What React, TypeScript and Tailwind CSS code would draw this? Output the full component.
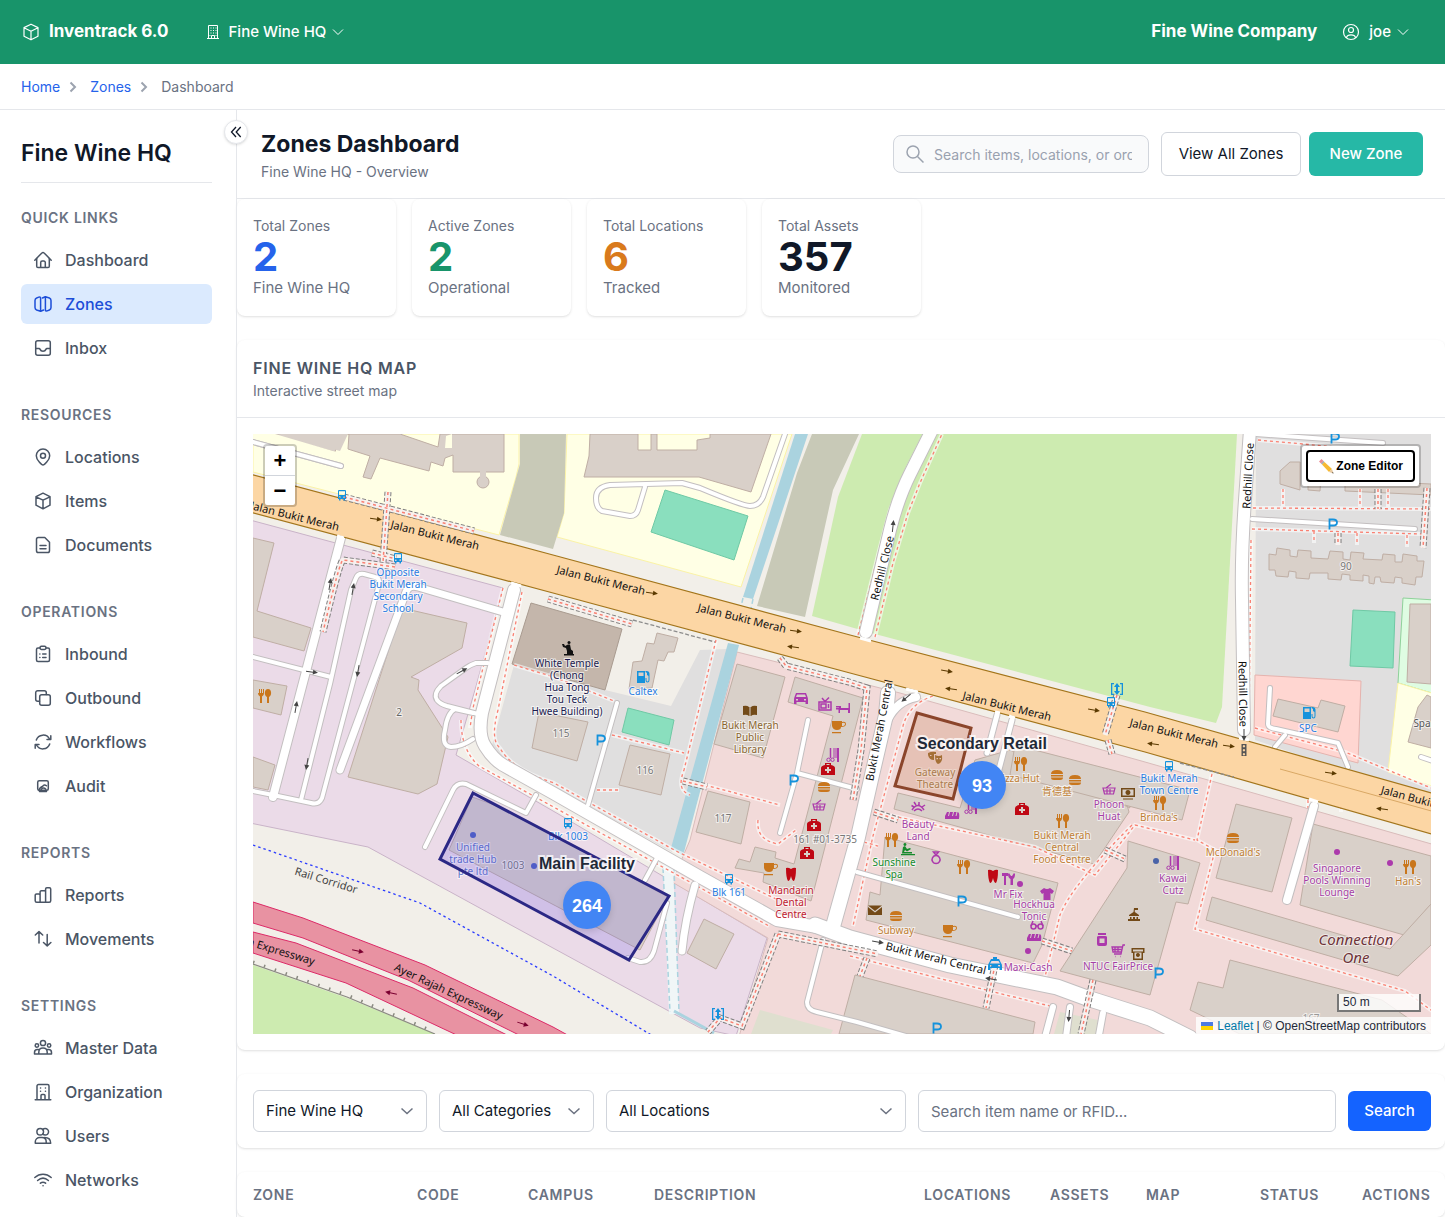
import type { ReactNode } from "react"

interface IconProps {
  className?: string
  children?: ReactNode
}

function Icon({ className = "w-5 h-5", children }: IconProps) {
  return (
    <svg className={className} viewBox="0 0 20 20" fill="none" stroke="currentColor" strokeWidth={1.5} strokeLinecap="round" strokeLinejoin="round" aria-hidden="true">
      {children}
    </svg>
  )
}

const cube = <path d="M10 2.2 17 5.6v8.6L10 17.8 3 14.2V5.6zM3 5.8l7 3.4 7-3.4M10 9.2v8.4" />

const navIcons: Record<string, ReactNode> = {
  Dashboard: (
    <>
      <path d="M1.8 10.2 8.9 2.9a1.5 1.5 0 0 1 2.2 0l7.1 7.3" />
      <path d="M3.7 8.6v7.6A1.3 1.3 0 0 0 5 17.5h10a1.3 1.3 0 0 0 1.3-1.3V8.6M7.7 17.5v-5a1.5 1.5 0 0 1 1.5-1.5h1.6a1.5 1.5 0 0 1 1.5 1.5v5" />
    </>
  ),
  Zones: (
    <>
      <path d="M7.6 17.2 3.6 16Q2 15.4 2 13.6V6.4q0-1.8 1.6-2.4l2.2-.9q1.8-.5 1.8 1z" />
      <path d="m12.4 2.8 4 1.2Q18 4.6 18 6.4v7.2q0 1.8-1.6 2.4l-2.2.9q-1.8.5-1.8-1z" />
      <path d="m7.6 17.2 3-1.2M12.4 2.8l-3 1.2" />
    </>
  ),
  Inbox: (
    <>
      <rect x="2.7" y="2.7" width="14.6" height="14.6" rx="2" />
      <path d="M3 10.5h3c.6 0 .9.4 1.1.9.4 1 1.5 1.8 2.9 1.8s2.5-.8 2.9-1.8c.2-.5.5-.9 1.1-.9h3" />
    </>
  ),
  Locations: (
    <>
      <path d="M10 18c-1 0-6.7-4.7-6.7-9.3a6.7 6.7 0 0 1 13.4 0C16.7 13.3 11 18 10 18z" />
      <circle cx="10" cy="8.7" r="2.5" />
    </>
  ),
  Items: cube,
  Documents: (
    <path d="M11.8 2.5H5.3a1.8 1.8 0 0 0-1.8 1.8v11.4a1.8 1.8 0 0 0 1.8 1.8h9.4a1.8 1.8 0 0 0 1.8-1.8V7.2zM7 10.5h6M7 13.7h6" />
  ),
  Inbound: (
    <>
      <path d="M7 4H5a1.5 1.5 0 0 0-1.5 1.5V16A1.5 1.5 0 0 0 5 17.5h10a1.5 1.5 0 0 0 1.5-1.5V5.5A1.5 1.5 0 0 0 15 4h-2" />
      <rect x="7" y="2.3" width="6" height="3.2" rx="1.4" />
      <path d="M6.8 10h.1M9.7 10H13M6.8 13.5h.1M9.7 13.5H13" />
    </>
  ),
  Outbound: (
    <>
      <rect x="6.7" y="6.7" width="10.6" height="10.6" rx="2" />
      <path d="M13.3 6.5V4.7a2 2 0 0 0-2-2H4.7a2 2 0 0 0-2 2v6.6a2 2 0 0 0 2 2h1.8" />
    </>
  ),
  Workflows: (
    <>
      <path d="M3.3 8A7.2 7.2 0 0 1 16.5 7M16.7 12A7.2 7.2 0 0 1 3.5 13" />
      <path d="M17.8 3.8v3.7H14M2.2 16.2v-3.7H6" />
    </>
  ),
  Audit: (
    <>
      <rect x="4.7" y="4.7" width="10.6" height="9.6" rx="1.5" />
      <path d="M6 14.5c.5-2.5 2-3.8 3.8-4.3.8-1.5 2.2-1.7 3.7-.4M8.3 13.3c.8-1.6 3.2-1.6 4.5 0M6.5 15.5h7" />
    </>
  ),
  Reports: (
    <path d="M2.2 10.2a1.3 1.3 0 0 1 1.3-1.3h2.3a1.3 1.3 0 0 1 1.3 1.3v7H3.7a1.5 1.5 0 0 1-1.5-1.5zM7.1 17.2V7a1.3 1.3 0 0 1 1.3-1.3h2.9A1.3 1.3 0 0 1 12.6 7M12.6 17.2V4a1.3 1.3 0 0 1 1.3-1.3h2.5A1.3 1.3 0 0 1 17.7 4v11.7a1.5 1.5 0 0 1-1.5 1.5H6.5" />
  ),
  Movements: <path d="M6 14V2.8M2.3 6 6 2.6 9.7 6M14.2 5.5v11.2M10.5 13.5l3.7 3.4 3.7-3.4" />,
  "Master Data": (
    <>
      <circle cx="10" cy="5" r="2.6" />
      <circle cx="3.9" cy="7.5" r="1.7" />
      <circle cx="16.1" cy="7.5" r="1.7" />
      <path d="M5.8 16v-1.8C5.8 11.8 7.5 10 10 10s4.2 1.8 4.2 4.2V16zM5.5 16h-4v-1.5c0-1.8.9-3 2.9-3h1M14.5 16h4v-1.5c0-1.8-.9-3-2.9-3h-1" />
    </>
  ),
  Organization: (
    <path d="M4 17.5V4a1.5 1.5 0 0 1 1.5-1.5h9A1.5 1.5 0 0 1 16 4v13.5M2.2 17.7h15.6M8 17.5v-4a1 1 0 0 1 1-1h2a1 1 0 0 1 1 1v4M7.5 6h.1M12.4 6h.1M7.5 9.2h.1M12.4 9.2h.1" />
  ),
  Users: (
    <>
      <circle cx="7.2" cy="5.8" r="3.3" />
      <path d="M9.8 3.6a3.3 3.3 0 1 1 0 4.4" />
      <path d="M2.3 17.2v-1.4c0-2.5 2-4.3 4.6-4.3h2c2.6 0 4.3 1.8 4.3 4.3v1.4zM11.5 11.5c3.9 0 6.2 1.6 6.2 5.7H13.5" />
    </>
  ),
  Networks: <path d="M1.8 7.5c4.9-4.4 11.5-4.4 16.4 0M4.6 10.5c3.3-2.9 7.5-2.9 10.8 0M7.4 13.2c1.7-1.3 3.5-1.3 5.2 0M10 15.8h.1" />,
}

const navSections = [
  { title: "Quick Links", items: ["Dashboard", "Zones", "Inbox"] },
  { title: "Resources", items: ["Locations", "Items", "Documents"] },
  { title: "Operations", items: ["Inbound", "Outbound", "Workflows", "Audit"] },
  { title: "Reports", items: ["Reports", "Movements"] },
  { title: "Settings", items: ["Master Data", "Organization", "Users", "Networks"] },
]

const stats = [
  { label: "Total Zones", value: "2", note: "Fine Wine HQ", color: "text-[#2563eb]" },
  { label: "Active Zones", value: "2", note: "Operational", color: "text-[#18946a]" },
  { label: "Total Locations", value: "6", note: "Tracked", color: "text-[#d97a1c]" },
  { label: "Total Assets", value: "357", note: "Monitored", color: "text-gray-900" },
]

const columns = [
  { name: "Zone", width: "w-[180px] pl-4" },
  { name: "Code", width: "w-[111px]" },
  { name: "Campus", width: "w-[126px]" },
  { name: "Description", width: "" },
  { name: "Locations", width: "w-[126px]" },
  { name: "Assets", width: "w-[96px]" },
  { name: "Map", width: "w-[114px]" },
  { name: "Status", width: "w-[102px]" },
  { name: "Actions", width: "w-[83px]" },
]

function TopBar() {
  return (
    <header className="flex items-center justify-between h-16 pl-[21px] pr-9 bg-[#18946a] text-white">
      <div className="flex items-center">
        <Icon className="w-5 h-5">
          <g strokeWidth={1.2}>{cube}</g>
        </Icon>
        <span className="ml-2 text-[17px] font-bold">Inventrack 6.0</span>
        <button className="flex items-center gap-1.5 ml-[34px]">
          <svg className="w-5 h-5" viewBox="0 0 20 20" fill="none" stroke="currentColor" strokeWidth={1} aria-hidden="true">
            <path d="M5.5 16.5V3.5h9v13M4 16.5h12M8.5 16.5v-3h3v3" />
            <path d="M7.5 6h1M10 6h1M12.5 6h1M7.5 8.5h1M10 8.5h1M12.5 8.5h1M7.5 11h1M10 11h1M12.5 11h1M6.5 13.5h1M12.5 13.5h1" />
          </svg>
          <span className="text-[15px] font-medium">Fine Wine HQ</span>
          <Chevron />
        </button>
      </div>
      <div className="flex items-center">
        <span className="text-[17px] font-bold">Fine Wine Company</span>
        <button className="flex items-center ml-6">
          <Icon className="w-5 h-5">
            <g strokeWidth={1.2}>
              <circle cx="10" cy="10" r="7.5" />
              <circle cx="10" cy="8" r="2.5" />
              <path d="M5.5 15.5c.5-2 2-2.7 4.5-2.7s4 .7 4.5 2.7" />
            </g>
          </Icon>
          <span className="ml-2 mr-1.5 text-[15px] font-medium">joe</span>
          <Chevron />
        </button>
      </div>
    </header>
  )
}

function Chevron() {
  return (
    <svg className="w-3 h-3" viewBox="0 0 12 12" fill="none" stroke="currentColor" aria-hidden="true">
      <path d="m1 3.5 5 5 5-5" />
    </svg>
  )
}

function Crumb() {
  return (
    <svg className="w-2.5 h-3" viewBox="0 0 10 12" fill="none" stroke="#9ca3af" strokeWidth={2} aria-hidden="true">
      <path d="m2.5 1.5 4.5 4.5-4.5 4.5" />
    </svg>
  )
}

function Breadcrumbs() {
  return (
    <nav aria-label="Breadcrumb" className="flex items-center gap-2 h-[46px] px-[21px] border-b border-gray-200 text-sm">
      <a href="#" className="text-[#2563eb]">Home</a>
      <Crumb />
      <a href="#" className="ml-1 text-[#2563eb]">Zones</a>
      <Crumb />
      <span className="ml-1 text-gray-500">Dashboard</span>
    </nav>
  )
}

function Sidebar() {
  return (
    <aside className="relative w-[237px] shrink-0 border-r border-gray-200 pl-[21px] pr-6 pt-[27px] pb-4">
      <button aria-label="Collapse sidebar" className="absolute top-2.5 -right-3 w-6 h-6 flex items-center justify-center rounded-full bg-white border border-gray-200 shadow-sm text-gray-900">
        <svg className="w-3 h-3" viewBox="0 0 12 12" fill="none" stroke="currentColor" strokeWidth={1.3} aria-hidden="true">
          <path d="M6 1 1.5 6 6 11M10.7 1 6.2 6l4.5 5" />
        </svg>
      </button>
      <h2 className="pb-[13px] border-b border-gray-200 text-[23px] leading-8 font-semibold text-gray-900">Fine Wine HQ</h2>
      <div className="flex flex-col gap-[37px] mt-[25px]">
        {navSections.map((section) => (
          <section key={section.title}>
            <h3 className="mb-3 text-sm font-semibold uppercase tracking-wider text-gray-500">{section.title}</h3>
            <ul className="space-y-1">
              {section.items.map((item) => (
                <li key={item}>
                  <a
                    href="#"
                    className={
                      item === "Zones"
                        ? "flex items-center gap-3 h-10 px-3 rounded-md bg-blue-100 text-[#1d4ed8] font-medium"
                        : "flex items-center gap-3 h-10 px-3 rounded-md text-gray-600 font-medium"
                    }
                  >
                    <Icon>{navIcons[item]}</Icon>
                    {item}
                  </a>
                </li>
              ))}
            </ul>
          </section>
        ))}
      </div>
    </aside>
  )
}

function PageHeader() {
  return (
    <div className="flex items-center justify-between pl-6 pr-[22px] h-[89px] border-b border-gray-200">
      <div>
        <h1 className="pt-0.5 text-[23px] leading-8 font-bold text-gray-900">Zones Dashboard</h1>
        <p className="mt-0.5 text-sm text-gray-500">Fine Wine HQ - Overview</p>
      </div>
      <div className="flex items-center">
        <div className="relative w-64">
          <svg className="absolute left-3 top-[9px] w-5 h-5" viewBox="0 0 20 20" fill="none" stroke="#9ca3af" strokeWidth={1.5} aria-hidden="true">
            <circle cx="8" cy="8" r="6" />
            <path d="m12.5 12.5 6 6" />
          </svg>
          <input aria-label="Search" placeholder="Search items, locations, or orders..." className="w-full h-[38px] pl-10 pr-4 rounded-lg border border-gray-300 bg-gray-50 text-sm placeholder:text-gray-400" />
        </div>
        <button className="ml-3 w-[140px] h-11 rounded-md border border-gray-300 text-[15px] text-gray-900">View All Zones</button>
        <button className="ml-2 w-[114px] h-11 rounded-md bg-[#26b8a6] text-[15px] text-white font-medium">New Zone</button>
      </div>
    </div>
  )
}

/* ---------- map data ---------- */

const areas = [
  // school grounds
  { fill: "#ffffe5", stroke: "#fbf3a6", points: "253,434 519,434 519,464 516,477 499,535 253,472" },
  { fill: "#ffffe5", stroke: "#fbf3a6", points: "567,434 792,434 741,587 557,537 564,513" },
  // scrub
  { fill: "#c8c9b7", points: "520,434 566,434 564,513 553,549 500,535 516,478 520,464" },
  { fill: "#c8c9b7", points: "812,434 859,434 833,490 805,617 757,606 797,473" },
  // parks
  { fill: "#cdebb0", points: "862,434 1237,434 1222,707 1216,723 1150,707 875,634 812,616 838,497" },
  { fill: "#cdebb0", points: "253,965 347,998 435,1034 253,1034" },
  // residential
  { fill: "#e0dfdf", points: "1256,434 1431,434 1431,800 1255,740" },
  { fill: "#e0dfdf", points: "514,665 605,690 671,706 700,650 728,649 672,852 560,790 503,760 492,745" },
  { fill: "#dffce2", stroke: "#8fd19a", points: "1403,598 1435,600 1435,694 1398,683" },
  { fill: "#ffffe5", stroke: "#fbf3a6", points: "1398,683 1435,694 1435,787 1388,772" },
  // fuel station plot
  { fill: "#ffd6d1", stroke: "#e5b3ae", points: "1255,675 1361,681 1358,763 1254,735" },
  // industrial
  { fill: "#ebdbe8", stroke: "#c9b3c8", points: "250,520 503,588 475,690 456,755 560,815 767,938 736,1036 700,1028 553,948 368,847 250,823" },
  // retail
  { fill: "#f2dad9", stroke: "#d9bcbb", points: "737,652 900,693 1145,762 1435,845 1435,1040 738,1040 768,938 672,882 690,840" },
  { fill: "#dfdfcf", points: "760,1010 833,1030 831,1034 751,1034" },
  { fill: "#dfdfcf", points: "1060,1012 1098,1020 1096,1034 1054,1034" },
]

const pitches = ["665,490 748,516 734,560 651,532", "628,708 674,720 669,745 622,732", "1353,610 1395,612 1393,668 1350,666"]

const buildings = [
  "277,434 343,434 335,452 348,450 350,434",
  "253,434 400,434 438,447 440,434 504,434 504,472 453,472 453,455 445,458 443,466 431,462 429,471 380,458 371,479 363,477 370,456 351,450 348,449 349,434 340,434 335,452 253,430",
  "590,434 616,434 616,434 638,434 638,450 651,450 651,434 657,434 657,450 697,450 697,440 710,438 710,434 771,434 751,492 699,477 595,477 584,477 589,456",
  "253,538 274,543 257,611 311,628 304,651 253,637",
  "253,680 287,686 281,715 253,708",
  "253,757 275,765 268,790 253,787",
  "402,608 467,623 462,648 411,677 419,680 418,690 448,737 437,784 418,794 348,777",
  "657,633 678,638 674,652 668,652 664,661 658,660 652,688 629,689 633,662 642,661 647,643 654,644",
  "539,712 588,722 577,761 532,748",
  "630,745 670,754 661,795 619,785",
  "737,664 785,677 763,758 714,744",
  "708,791 750,802 741,844 696,832",
  "795,677 863,698 815,886 811,901 763,882 764,873 735,868 739,859 750,862 755,847 776,852 775,858 794,864 833,716 788,702",
  "704,919 734,934 716,969 687,953",
  "898,793 960,808 975,760 1010,750 1130,808 1123,790 1129,812 1094,864 894,809",
  "1015,745 1190,790 1182,820 1010,775",
  "885,837 1058,883 1042,945 1033,963 866,920 870,892 880,895",
  "1128,841 1200,863 1188,904 1176,902 1150,995 1060,971 1127,868",
  "1236,804 1292,818 1272,892 1216,878",
  "1313,824 1431,856 1431,904 1404,935 1317,910 1300,905",
  "1212,897 1390,949 1431,904 1431,945 1398,976 1206,920",
  "1230,960 1382,1000 1431,1034 1240,1034 1190,1010 1198,982 1223,988",
  "855,975 1035,1022 1033,1034 839,1034",
  "1280,471 1290,462 1300,462 1300,490 1280,484",
  "1308,476 1321,476 1320,491 1308,490",
  "1345,480 1431,484 1431,495 1345,491",
  "1431,604 1410,604 1407,682 1431,684",
  "1278,699 1318,708 1321,700 1345,706 1338,732 1273,716",
  "1427,695 1431,697 1431,748 1408,742 1418,707",
  "1269,554 1276,555 1277,548 1290,550 1290,556 1297,557 1298,550 1311,551 1311,558 1328,559 1330,551 1343,552 1343,559 1350,560 1351,552 1364,553 1363,559 1382,560 1383,554 1395,555 1395,562 1402,562 1403,554 1417,556 1417,561 1424,561 1422,577 1416,577 1415,585 1402,583 1402,578 1395,577 1394,583 1381,582 1380,577 1375,577 1374,584 1369,583 1369,576 1363,575 1363,581 1350,580 1350,575 1342,574 1341,580 1328,579 1328,573 1310,573 1309,579 1296,578 1296,572 1289,571 1288,577 1276,576 1275,570 1269,570",
]

const roads = [
  { w: 8, d: "M341 538 273 797" },
  { w: 4, d: "M253 791l20 4 38 8q8 2 11-5l57-214q1-6-4-7l-11-3q-6-1-8 4l-5 12-21 94-29 116" },
  { w: 7, d: "M503 612l-85-25q-9-3-12 5L340 770" },
  { w: 4, d: "M253 657l78 20" },
  { w: 4, d: "M253 442l88 24" },
  { w: 4, d: "M488 663h-12q-6 2-10 5l-25 18q-8 8-4 14 3 4 10 6l31 8M473 713l-18-4q-8 4-10 21 -4 16 6 17 10 0 22-8" },
  { w: 4, d: "M425 847l28-57q4-8 13-6l60 29 10-18M645 880l12-22M667 903l-13 48q-4 12-14 11l-12-4" },
  { w: 4, d: "M785 434l-22 63q-4 9-13 9-7 0-50-18l-18-5-72 2q-14 2-14 13 0 10 6 13l28 5q6 0 8-6l7-23" },
  { w: 12, d: "M514 590l-32 123q-4 22 3 33 8 13 18 19L553 793l147 84 77 43 46 8" },
  { w: 15, d: "M815 925l35 13 100 27 107 22 30 11 63 20 40 20" },
  { w: 14, d: "M832 930l26-93 14-62 14-60 2-22" },
  { w: 8, d: "M916 697q-19 4-28 22" },
  { w: 12, d: "M866 632l24-102q8-32 20-56l22-44" },
  { w: 12, d: "M1250 430l-5 70q-4 55-3 100l2 130" },
  { w: 4, d: "M1252 519l163 10M1256 434l127 9" },
  { w: 7, d: "M695 885q-10 35-13 66" },
  { w: 4, d: "M617 703l-29 102" },
  { w: 4, d: "M808 720l-11 53-17 60M797 773l60 16" },
  { w: 4, d: "M823 940l-16 62q0 8 10 10l40 10 70 20" },
  { w: 4, d: "M857 872l161 45" },
  { w: 5, d: "M997 715l-10 38M1012 720l-15 57" },
  { w: 8, d: "M1314 806l-27 94" },
  { w: 4, d: "M1270 688l-2 36q0 4 8 5l62 14 10 24M1285 735l-10 12M1421 757l12 4" },
  { w: 6, d: "M1053 1007l-8 30M1070 1007l-4 30M1103 1013l-4 22" },
]

const footways = [
  "M503 588l-30 120-3 20M522 592l-24 118q-8 30 2 38 12 22 54 35l122 68 100 48",
  "M461 720q0 30 18 46l80 44 120 66 90 50",
  "M514 665l40 12 60 24M716 640l-32 130q-8 20 6 25",
  "M705 785l75 20M758 820q-2 20 20 24l18-14",
  "M612 735l72 18M597 790h22",
  "M858 635l22-88 10-37 18-43 17-33M875 637l18-74 15-50 12-30 22-49",
  "M933 696q-24 8-30 30l-30 110-20 90",
  "M875 812l160 35 60 28 40-50 60 15",
  "M1212 774l-15 66 18 10-20 79 210 62 30 22",
  "M1132 825q-60 60-72 90l-16 66",
  "M1258 440l90 8M1253 508l180 1M1252 529l170 5M1283 489v18M1360 489v18M1388 489v18M1314 531v12M1357 533v12M1407 535v12M1251 540l-2 190",
  "M1255 728l90 24 86 36M1341 800v12M1308 800v8",
  "M850 956l200 50M864 842l14 4",
]

const covered = [
  "M344 497l130 34M388 492l-5 70M372 553l24 6M395 567l-52-7q-3 0-20 72",
  "M548 599l84 25",
  "M780 658l6 8 63 16 18 6-6 62-8 50",
  "M778 934l40 8 60 12M778 934l-36 92-22-8-12 14",
  "M867 958l-7 18M995 965l-9 43M1093 980l-12 54",
  "M1117 695l-12 40M1105 850l20 9M1042 941l30 10M683 781l24 6M874 812l24 8",
  "M1427 488l-4 60M1378 489v20M1338 533v12M1108 740l4 14",
]

interface MapText {
  x: number
  y: number
  lines: string[]
  color: string
  rotate?: number
  size?: number
}

const placeLabels: MapText[] = [
  { x: 398, y: 576, lines: ["Opposite", "Bukit Merah", "Secondary", "School"], color: "#2a7de1" },
  { x: 567, y: 667, lines: ["White Temple", "(Chong", "Hua Tong", "Tou Teck", "Hwee Building)"], color: "#1b1b4f" },
  { x: 643, y: 695, lines: ["Caltex"], color: "#2a7de1" },
  { x: 750, y: 729, lines: ["Bukit Merah", "Public", "Library"], color: "#8a6530" },
  { x: 399, y: 716, lines: ["2"], color: "#666" },
  { x: 561, y: 737, lines: ["115"], color: "#777" },
  { x: 645, y: 774, lines: ["116"], color: "#777" },
  { x: 723, y: 822, lines: ["117"], color: "#777" },
  { x: 1346, y: 570, lines: ["90"], color: "#777" },
  { x: 825, y: 843, lines: ["161 #01-3735"], color: "#777" },
  { x: 513, y: 869, lines: ["1003"], color: "#777" },
  { x: 1311, y: 1022, lines: ["167"], color: "#999" },
  { x: 473, y: 851, lines: ["Unified", "trade Hub", "pte ltd"], color: "#5a6fc4" },
  { x: 568, y: 840, lines: ["Blk 1003"], color: "#2a7de1" },
  { x: 729, y: 896, lines: ["Blk 161"], color: "#2a7de1" },
  { x: 791, y: 894, lines: ["Mandarin", "Dental", "Centre"], color: "#bf2030" },
  { x: 935, y: 776, lines: ["Gateway", "Theatre"], color: "#a88356" },
  { x: 1018, y: 782, lines: ["Pizza Hut"], color: "#c07f35" },
  { x: 1057, y: 795, lines: ["肯德基"], color: "#c07f35" },
  { x: 918, y: 828, lines: ["Beauty", "Land"], color: "#a53fa5" },
  { x: 894, y: 866, lines: ["Sunshine", "Spa"], color: "#168a2c" },
  { x: 1062, y: 839, lines: ["Bukit Merah", "Central", "Food Centre"], color: "#c07f35" },
  { x: 1109, y: 808, lines: ["Phoon", "Huat"], color: "#a53fa5" },
  { x: 1169, y: 782, lines: ["Bukit Merah", "Town Centre"], color: "#2a7de1" },
  { x: 1159, y: 821, lines: ["Brinda's"], color: "#c07f35" },
  { x: 1233, y: 856, lines: ["McDonald's"], color: "#c07f35" },
  { x: 1173, y: 882, lines: ["Kawai", "Cutz"], color: "#a53fa5" },
  { x: 1337, y: 872, lines: ["Singapore", "Pools Winning", "Lounge"], color: "#a53fa5" },
  { x: 1408, y: 885, lines: ["Han's"], color: "#c07f35" },
  { x: 1008, y: 898, lines: ["Mr Fix"], color: "#a53fa5" },
  { x: 1034, y: 908, lines: ["Hockhua", "Tonic"], color: "#a53fa5" },
  { x: 896, y: 934, lines: ["Subway"], color: "#c07f35" },
  { x: 1028, y: 971, lines: ["Maxi-Cash"], color: "#a53fa5" },
  { x: 1118, y: 970, lines: ["NTUC FairPrice"], color: "#a53fa5" },
  { x: 1308, y: 732, lines: ["SPC"], color: "#2a7de1" },
  { x: 1422, y: 727, lines: ["Spa"], color: "#555" },
]

const streetLabels: MapText[] = [
  { x: 294, y: 520, lines: ["Jalan Bukit Merah"], color: "#111", rotate: 14 },
  { x: 434, y: 539, lines: ["Jalan Bukit Merah"], color: "#111", rotate: 14 },
  { x: 600, y: 584, lines: ["Jalan Bukit Merah"], color: "#111", rotate: 14 },
  { x: 741, y: 622, lines: ["Jalan Bukit Merah"], color: "#111", rotate: 14 },
  { x: 1006, y: 710, lines: ["Jalan Bukit Merah"], color: "#111", rotate: 14 },
  { x: 1173, y: 737, lines: ["Jalan Bukit Merah"], color: "#111", rotate: 14 },
  { x: 1424, y: 805, lines: ["Jalan Bukit Merah"], color: "#111", rotate: 15 },
  { x: 886, y: 569, lines: ["Redhill Close"], color: "#111", rotate: -76 },
  { x: 1252, y: 476, lines: ["Redhill Close"], color: "#111", rotate: -87 },
  { x: 1239, y: 694, lines: ["Redhill Close"], color: "#111", rotate: 89 },
  { x: 883, y: 731, lines: ["Bukit Merah Central"], color: "#111", rotate: -79 },
  { x: 935, y: 962, lines: ["Bukit Merah Central"], color: "#111", rotate: 14 },
  { x: 325, y: 884, lines: ["Rail Corridor"], color: "#444", rotate: 17 },
  { x: 447, y: 995, lines: ["Ayer Rajah Expressway"], color: "#111", rotate: 25 },
  { x: 257, y: 948, lines: ["Ayer Rajah Expressway"], color: "#111", rotate: 17 },
]

const arrows = [
  [376, 519, 8, "#5b3a00"], [652, 593, 8, "#5b3a00"], [796, 631, 8, "#5b3a00"], [793, 647, 188, "#5b3a00"],
  [947, 671, 10, "#5b3a00"], [951, 689, 188, "#5b3a00"], [1094, 710, 10, "#5b3a00"], [1153, 744, 188, "#5b3a00"],
  [1229, 746, 8, "#5b3a00"], [1331, 773, 8, "#5b3a00"], [1382, 809, 188, "#5b3a00"],
  [358, 951, 12, "#7a0030"], [391, 993, 192, "#7a0030"], [523, 1024, 18, "#7a0030"],
  [330, 584, -80, "#444"], [353, 589, -80, "#444"], [312, 672, 8, "#444"], [358, 671, 100, "#444"],
  [296, 707, -80, "#444"], [462, 671, -28, "#444"], [307, 764, 100, "#444"], [893, 526, -84, "#444"],
  [906, 698, 140, "#444"], [878, 942, 10, "#444"], [991, 979, 190, "#444"], [1244, 735, 90, "#444"], [1069, 1016, 95, "#444"],
] as const

type PoiKind =
  | "food" | "burger" | "cup" | "bus" | "health" | "tooth" | "basket" | "fuel" | "dot" | "parking" | "scissors" | "car" | "tv" | "bed"
  | "book" | "temple" | "mail" | "ring" | "bread" | "shirt" | "cash" | "tools" | "lift" | "taxi" | "townhall" | "jar" | "atm" | "glasses" | "mask" | "spa" | "lash" | "cart" | "signal"

const poiShapes: Record<PoiKind, ReactNode> = {
  food: <path d="M-6-7v4q0 3 2 3.5V7h2V.5q2-.5 2-3.5v-4h-1v4h-1v-4h-1v4h-1v-4h-1v4h-1v-4zM4-7C0-7 0 0 3 1v6h2V1c3-1 3-8-1-8z" />,
  burger: <path d="M-6-1q0-4 6-4t6 4zM-6 0H6v1.5H-6zM-6 2.5H6Q6 5 3 5h-6q-3 0-3-2.5z" />,
  cup: <path fillRule="evenodd" d="M-6-6H4v1q4-1 4 2T3 0q0 3-4 3t-5-4zM4-4v3q3 0 3-2T4-4zM-6 5H3v1.3H-6z" />,
  bus: <path fillRule="evenodd" d="M-3-5h6q1 0 1 1v8h-1v1.5H1.5V4h-3v1.5H-3V4h-1v-8q0-1 1-1zm0 1.3V0h6v-3.7zM-3 1.5V3h1.5V1.5zm4.5 0V3H3V1.5z" />,
  health: <path fillRule="evenodd" d="M-3-4v-2h6v2q4 1 4 3v7H-7v-7q0-2 4-3zm1.5 0h3v-1h-3zM-1-2v2h-2v2h2v2h2V2h2V0H1v-2z" />,
  tooth: <path d="M-5-6Q-3-7 0-5 3-7 5-6 5 4 3 7 1 7 0 2-1 7-3 7-5 4-5-6z" />,
  basket: <path fill="none" stroke="currentColor" strokeWidth="1.2" d="M-6-1H6L4.5 5h-9zM-3-1 2-5M-2 0v5M1 0v5M-5 2H5" />,
  fuel: <path fillRule="evenodd" d="M-6-6H2v12H-6zm1.5 1.5V-1h5v-3.5zM2.5-6h1q3 0 3 3v6q0 2.500-2 2.500T2.500 3V1h1v2q0 1.500 1 1.500t1-1.500v-4L4-2v-2l-1.500-1z" />,
  dot: <circle r="3" />,
  parking: <path fill="none" stroke="currentColor" strokeWidth="1.8" d="M-3.5 5.5v-10H0q4 0 4 3T0 1.500h-3.500" />,
  scissors: (
    <g fill="none" stroke="currentColor">
      <path strokeWidth="2" d="M5-7V7" />
      <path d="M0-6h4M0-4h4M0-2h4M0 0h4M0 2h4" />
      <path strokeWidth="1.5" d="M-2.500-7V3" />
      <circle cx="-4.500" cy="4.800" r="1.700" />
      <circle cx="-.5" cy="4.800" r="1.700" />
    </g>
  ),
  car: <path fillRule="evenodd" d="M-5-5H5l1.500 4Q7 0 7 2v4H4.500V4h-9v2H-7V2q0-2 .5-3zm1 1.500L-5-1H5l-1-2.500zM-5 1v1.500h2V1zm8 0v1.500h2V1z" />,
  tv: <path fill="none" stroke="currentColor" strokeWidth="1.5" d="M-6-2H6v8H-6zM-4 0h5v4h-5zM3.500 0v4M-3-6 0-2.500l4-4" />,
  bed: <path d="M7-5H5.500v5H-2v-2h-5v1.500h3V0h-3v1.500h2.500V5H-3V2h8v3h2z" />,
  book: <path d="M-7-5q4-1 6 1v9q-2-2-6-1zM7-5Q3-6 1-4v9q2-2 6-1zM-.5-4h1v9h-1z" />,
  temple: (
    <g>
      <circle cx="1" cy="-5.500" r="1.500" />
      <path d="M-6-4h2l1 2 3-1.500h2l1 5L5 3v3h1v1.500H-4V6h3V3l-1-3-3-1z" />
    </g>
  ),
  mail: <path d="M-7-4.500H7L0 1zM-7-3l7 5.500L7-3v8H-7z" />,
  ring: <path fill="none" stroke="currentColor" strokeWidth="1.5" d="M-2.500-6h5L0-3zM0-2.500a4 4 0 1 0 .1 0" />,
  bread: <path d="M-7 4v-3l2-4h2L-4 1h1l1-4h3L0 1h1l1-4h2.500L3.500 1h1l1-4Q8-3 7 4z" />,
  shirt: <path d="M-3-6q3 2 6 0l4 3-2 3-1.500-1v7h-7v-7L-5 0l-2-3z" />,
  cash: <path fillRule="evenodd" d="M-7-5H7v9H-7zm1.500 1.500v6h11v-6zM0-3a2.500 2.500 0 1 1-.1 0zM-5 5.500H5v1H-5z" />,
  tools: <path d="M-6-6h6v3h-2v9h-2v-9h-2zM1-6l2 3h1l2-3 1 1q0 4-2 5v6H2.500V0Q0-1 0-5z" />,
  lift: <path d="M-6-6h3v1.200h-1.700v9.600H-3V6h-3zM6-6H3v1.200h1.700v9.600H3V6h3zM0-6l3 4H1v4h2L0 6l-3-4h2v-4h-2z" />,
  taxi: <path fillRule="evenodd" d="M-2-7h4v2h2l2 4q1 1 1 3v4H4.500V4h-9v2H-7V2q0-2 1-3l2-4h2zm-1.500 4L-5-.5H5L3.500-3zM-5 1v1.500h2V1zm8 0v1.500h2V1z" />,
  townhall: <path d="M0-7h4v2H.8v2L5 0v1H-5V0l4.500-3zM-4 2h1.500v2H-1V2H1v2h1.500V2H4v2h2v2H-6V4h2z" />,
  jar: <path fillRule="evenodd" d="M-4-6h8v2h-8zM-5-2q0-1 2-1h6q2 0 2 1v7q0 2-2 2h-6q-2 0-2-2zm2.500 1.500V4h5V-.5z" />,
  atm: <path fillRule="evenodd" d="M-6.500-6h13v5H5v7H-5v-7h-1.500zm1.500 1.500v2h10v-2zm1.500 3v6h7v-6zM0-1a2 2 0 1 1-.1 0z" />,
  glasses: (
    <g fill="none" stroke="currentColor" strokeWidth="1.5">
      <circle cx="-3.500" cy="1.500" r="2.500" />
      <circle cx="3.500" cy="1.500" r="2.500" />
      <path d="M-1 1h2M-6 1l2-5M6 1 4-4" />
    </g>
  ),
  mask: <path fillRule="evenodd" d="M-7-5q4-2 8-1v2H-1v6q-5 0-6-5zM0-3q4 2 7 0 1 8-4 9-3-1-3-9zM1.500 0v1.200H3V0zm3 0v1.200H6V0zM-5-3v1h1.500v-1z" />,
  spa: <path d="M-3-6a1.500 1.500 0 1 1-.1 0zM-5-2l2-1 2 3 3-1 1 1-4 2.500-2-1.500-1 2h8v1.500H-6zM-7 5H7v1.300H-7z" />,
  lash: <path fill="none" stroke="currentColor" strokeWidth="1.5" d="M-6 2q6-9 12 0M-4-1l-2.500-1.500M-2-3l-2-3M1-3V-6M4-1l3-2M-4 3q4-4 8 0" />,
  cart: <path fill="none" stroke="currentColor" strokeWidth="1.3" d="M7-6H5L3 3h-7M4.500-4H-6l1 5h8.500M-5.500-1.500H4M-3-4v5M0-4v5M-3 5.500h.5M2 5.500h.5" />,
  signal: <path fillRule="evenodd" d="M-2.500-6h5V6h-5zM0-5a1.200 1.200 0 1 1-.1 0zm0 4a1.200 1.200 0 1 1-.1 0zm0 4a1.200 1.200 0 1 1-.1 0z" />,
}

const FOOD = "#c9761c"
const SHOP = "#ac39ac"
const HEALTH = "#bf0814"
const TRANSPORT = "#1592dc"
const AMENITY = "#734a18"

const pois: [PoiKind, number, number, string][] = [
  ["bus", 342, 495, TRANSPORT], ["bus", 398, 558, TRANSPORT], ["bus", 568, 823, TRANSPORT], ["bus", 729, 879, TRANSPORT],
  ["bus", 1169, 766, TRANSPORT], ["bus", 1111, 702, TRANSPORT], ["lift", 1117, 689, TRANSPORT], ["lift", 718, 1014, TRANSPORT],
  ["taxi", 995, 964, TRANSPORT], ["fuel", 643, 677, TRANSPORT], ["fuel", 1309, 713, TRANSPORT],
  ["parking", 601, 740, TRANSPORT], ["parking", 794, 780, TRANSPORT], ["parking", 962, 901, TRANSPORT], ["parking", 937, 1028, TRANSPORT],
  ["parking", 1159, 973, TRANSPORT], ["parking", 1333, 524, TRANSPORT], ["parking", 1335, 438, TRANSPORT],
  ["food", 264, 696, FOOD], ["food", 1020, 764, FOOD], ["food", 1062, 821, FOOD], ["food", 891, 840, FOOD], ["food", 963, 867, FOOD],
  ["food", 1159, 803, FOOD], ["food", 1409, 867, FOOD],
  ["burger", 1057, 775, FOOD], ["burger", 1075, 780, FOOD], ["burger", 824, 787, FOOD], ["burger", 896, 916, FOOD], ["burger", 1233, 838, FOOD],
  ["cup", 838, 727, FOOD], ["cup", 770, 869, FOOD], ["cup", 949, 931, FOOD],
  ["health", 828, 769, HEALTH], ["health", 814, 825, HEALTH], ["health", 807, 853, HEALTH], ["health", 1022, 809, HEALTH],
  ["tooth", 791, 874, HEALTH], ["tooth", 993, 876, HEALTH],
  ["car", 801, 698, SHOP], ["tv", 825, 704, SHOP], ["bed", 843, 708, SHOP], ["scissors", 833, 755, SHOP], ["basket", 819, 805, SHOP],
  ["lash", 918, 808, SHOP], ["bread", 952, 815, SHOP], ["scissors", 971, 807, SHOP], ["basket", 1109, 789, SHOP], ["ring", 936, 858, SHOP],
  ["tools", 1008, 879, SHOP], ["dot", 1020, 884, SHOP], ["shirt", 1047, 894, SHOP], ["glasses", 1037, 925, SHOP], ["bread", 1034, 937, SHOP],
  ["dot", 1028, 951, SHOP], ["scissors", 1173, 863, SHOP], ["dot", 1337, 852, SHOP], ["dot", 1390, 863, SHOP], ["jar", 1102, 939, SHOP],
  ["cart", 1118, 951, SHOP], ["spa", 908, 849, "#168a2c"], ["dot", 1156, 861, "#4a63a8"], ["dot", 473, 835, "#4a5fc0"], ["dot", 534, 866, "#4a5fc0"],
  ["book", 750, 711, AMENITY], ["temple", 568, 648, "#111"], ["mail", 875, 910, AMENITY], ["cash", 1128, 793, AMENITY],
  ["townhall", 1134, 915, AMENITY], ["atm", 1138, 954, AMENITY], ["mask", 935, 758, "#a0733a"], ["signal", 1244, 750, "#555"],
]

function MapLabel({ x, y, lines, color, rotate = 0, size = 10 }: MapText) {
  return (
    <text
      transform={`translate(${x} ${y}) rotate(${rotate})`}
      textAnchor="middle"
      fontSize={size}
      fill={color}
      stroke={rotate ? "none" : "#ffffffaa"}
      strokeWidth={2}
      paintOrder="stroke"
    >
      {lines.map((line, i) => (
        <tspan key={line} x={0} y={i * 12}>{line}</tspan>
      ))}
    </text>
  )
}

function ZoneMarker({ x, y, name, count }: { x: number; y: number; name: string; count: number }) {
  return (
    <g textAnchor="middle" fontWeight={700} className="font-['Liberation_Sans',sans-serif]">
      <circle cx={x} cy={y} r={24} fill="#4285f4" className="drop-shadow-md" />
      <text x={x} y={y + 7} fontSize={18} fill="#fff">{count}</text>
      <text x={x} y={y - 36} fontSize={16} fill="#1f2937" stroke="#fff" strokeWidth={4} strokeOpacity={0.75} paintOrder="stroke">{name}</text>
    </g>
  )
}

function StreetMap() {
  return (
    <svg className="block w-full h-[600px] font-['Noto_Sans','Noto_Sans_CJK_SC',sans-serif]" viewBox="253 434 1178 600" preserveAspectRatio="xMidYMid slice" role="img" aria-label="Street map of Fine Wine HQ">
      <rect x="0" y="0" width="2000" height="1600" fill="#f2efe9" />
      {areas.map((a) => (
        <polygon key={a.points} points={a.points} fill={a.fill} stroke={a.stroke ?? "none"} />
      ))}
      <polygon points="795,434 808,434 753,599 743,597" fill="#aad3df" />
      <polygon points="728,643 739,645 683,856 671,848" fill="#aad3df" />
      <path d="M668 864l6 150" stroke="#f0f6f7" strokeWidth={10} />
      <path d="M663 868l7 144M674 868l5 144M743 598l-2 9M753 599l-2 10" stroke="#aad3df" strokeWidth={1.5} strokeDasharray="5 3" fill="none" />
      <path d="M674 1011l40 22" stroke="#aad3df" strokeWidth={3} />
      {pitches.map((p) => (
        <polygon key={p} points={p} fill="#8adfbe" stroke="#6fc9a5" />
      ))}
      <g fill="#d9d0c9" stroke="#bfaea4">
        {buildings.slice(1).map((b) => (
          <polygon key={b} points={b} />
        ))}
        <circle cx="483" cy="482" r="6" />
        <path d="M480 471h6v8h-6z" stroke="none" />
        <polygon points="531,603 622,629 605,690 512,664" fill="#c4b6ab" stroke="#a99b90" />
        <polygon points="472,797 500,807 668,897 640,950 449,850" />
      </g>
      {/* courtyards and the open ground west of the school block */}
      <path d="M253 434h22l58 17 18 4 12 3-4 14-106-30zM446 436l6-2v14h-7z" fill="#ffffe5" />
      <path d="M278 434l62 17 8-17z" fill="#d9d0c9" />
      <path d="M253 442l88 24" fill="none" stroke="#c3bfc0" strokeWidth={6} strokeLinecap="round" />

      <g fill="none" stroke="#fff" strokeWidth={4} opacity={0.6}>
        {footways.map((d) => (
          <path key={d} d={d} />
        ))}
      </g>
      <g fill="none" stroke="#fa8072" strokeWidth={1.3} strokeDasharray="3 3">
        {footways.map((d) => (
          <path key={d} d={d} />
        ))}
      </g>
      <g fill="none" strokeLinecap="round" strokeLinejoin="round">
        {roads.map((r) => (
          <path key={r.d} d={r.d} stroke="#c3bfc0" strokeWidth={r.w + 2} />
        ))}
        {roads.map((r) => (
          <path key={r.d} d={r.d} stroke="#fff" strokeWidth={r.w} />
        ))}
      </g>

      <path d="M253 902l50 16 122 47 128 62 20 11h-48l-117-58-105-42-50-15z" fill="#e892a2" stroke="#dc2a67" />
      <path d="M253 932l43 11 117 45 100 50h-50l-117-55-93-30z" fill="#e892a2" stroke="#dc2a67" />
      <path d="M253 964l94 33 88 37" fill="none" stroke="#8a8a80" strokeWidth={1.2} />
      <path d="M253 962l94 33 88 37" fill="none" stroke="#8a8a80" strokeWidth={3} strokeDasharray="1.5 10" />
      <path d="M253 845l167 58 133 73 100 60" fill="none" stroke="#2b3cff" strokeWidth={1.3} strokeDasharray="2.5 3" />

      <path d="M250 474 553 555l297 80 295 77 290 82v41l-290-83-295-79-297-80-303-81z" fill="#fcd6a4" stroke="#a3751b" strokeWidth={1.2} />
      <path d="M1280 769l155 43" stroke="#d9a865" fill="none" />
      <path d="M860 638l11 3M511 583l10 3M337 536l7 2M1239 738l10 2M885 683l9 3M906 689l12 3M1309 799l9 3M995 712l5 1M1009 716l6 2" stroke="#fff" strokeWidth={3} />
      <path d="M633 620l82 22M1180 763l54 14" fill="none" stroke="#8d8d8d" strokeWidth={1.3} strokeDasharray="4 2" />

      <g fill="none">
        {covered.map((d) => (
          <g key={d}>
            <path d={d} stroke="#7d7d7d" strokeWidth={7} strokeDasharray="4 2" />
            <path d={d} stroke="#f7f1ef" strokeWidth={5} />
            <path d={d} stroke="#fa8072" strokeWidth={1.5} strokeDasharray="3 3" />
          </g>
        ))}
      </g>

      {pois.map(([kind, x, y, color]) => (
        <g key={`${kind}-${x}-${y}`} transform={`translate(${x} ${y})`} fill="currentColor" color={color}>
          {poiShapes[kind]}
        </g>
      ))}
      {arrows.map(([x, y, angle, color]) => (
        <path key={`${x}-${y}`} transform={`translate(${x} ${y}) rotate(${angle})`} d="M-6-.5H1V-2.5L6 0 1 2.5V.5H-6z" fill={color} />
      ))}
      {placeLabels.map((l) => (
        <MapLabel key={`${l.x}-${l.y}`} {...l} />
      ))}
      {streetLabels.map((l) => (
        <MapLabel key={`${l.x}-${l.y}`} {...l} size={11} />
      ))}
      <g fill="#6d3339" fontSize={15} fontStyle="italic" textAnchor="middle" stroke="#ffffff88" strokeWidth={2} paintOrder="stroke">
        <text x="1356" y="945">Connection</text>
        <text x="1356" y="963">One</text>
      </g>

      <polygon points="473,793 669,896 629,960 440,859" fill="#6255e8" fillOpacity={0.2} stroke="#2b2885" strokeWidth={3} />
      <polygon points="917,713 971,728 953,799 895,786" fill="#b8632e" fillOpacity={0.2} stroke="#8b452b" strokeWidth={3} />
      <ZoneMarker x={587} y={905} name="Main Facility" count={264} />
      <ZoneMarker x={982} y={785} name="Secondary Retail" count={93} />
    </svg>
  )
}

function Pencil() {
  return (
    <svg className="w-4 h-4" viewBox="0 0 16 16" aria-hidden="true">
      <path d="m1 3.5 2.5-2.5 2 2L3 5.500z" fill="#ea8a92" />
      <path d="m3 5.500 2.500-2.500 1 1L4 6.500z" fill="#9aa5ad" />
      <path d="m4 6.500 2.500-2.500 7.500 7-3 3z" fill="#f6b932" />
      <path d="m11 14 3-3 1.500 4.500z" fill="#e8c9a0" />
      <path d="m14 15 1-1 .5 1.500z" fill="#333" />
    </svg>
  )
}

function MapCard() {
  return (
    <section className="mt-6 bg-white rounded-lg shadow-sm">
      <div className="px-4 py-4 border-b border-gray-200">
        <h2 className="font-semibold uppercase tracking-wider text-gray-600">Fine Wine HQ Map</h2>
        <p className="mt-px text-sm text-gray-500">Interactive street map</p>
      </div>
      <div className="pl-4 pr-3.5 py-4">
        <div className="relative overflow-hidden font-['Liberation_Sans',sans-serif]">
          <StreetMap />
          <div className="absolute top-2.5 left-2.5 flex flex-col rounded border-2 border-black/20 bg-white bg-clip-padding text-black">
            <button aria-label="Zoom in" className="w-[30px] h-[30px] border-b border-gray-300 text-[22px] leading-[30px] font-bold">+</button>
            <button aria-label="Zoom out" className="w-[30px] h-[29px] text-[22px] leading-[30px] font-bold">−</button>
          </div>
          <div className="absolute top-2.5 right-2.5 p-1 rounded border-2 border-black/20 bg-white bg-clip-padding">
            <button className="flex items-center gap-0.5 h-8 px-2.5 rounded border-2 border-black bg-white text-xs font-bold text-black">
              <Pencil />
              Zone Editor
            </button>
          </div>
          <div className="absolute right-2.5 bottom-[22px] w-[84px] h-[18px] pl-1 border-2 border-t-0 border-[#777] bg-white/80 text-xs leading-4 text-gray-800">50 m</div>
          <div className="absolute right-0 bottom-0 flex items-center h-[17px] px-[5px] bg-white/80 text-xs text-gray-800 whitespace-pre">
            <svg className="w-3 h-2 mr-1" viewBox="0 0 12 8" aria-hidden="true">
              <path fill="#4c7be1" d="M0 0h12v4H0z" />
              <path fill="#ffd500" d="M0 4h12v4H0z" />
            </svg>
            <a href="#" className="text-[#0078a8]">Leaflet</a> | © OpenStreetMap contributors
          </div>
        </div>
      </div>
    </section>
  )
}

function FilterSelect({ label, className }: { label: string; className: string }) {
  return (
    <div className={`relative ${className}`}>
      <select aria-label={label} className="w-full h-[42px] pl-3 pr-9 appearance-none rounded-md border border-gray-300 bg-white text-[15px] text-gray-900">
        <option>{label}</option>
      </select>
      <svg className="absolute right-3.5 top-[15px] w-3 h-3 pointer-events-none" viewBox="0 0 12 12" fill="none" stroke="#6b7280" strokeWidth={1.5} aria-hidden="true">
        <path d="m.5 3.5 5.5 5 5.5-5" />
      </svg>
    </div>
  )
}

function Filters() {
  return (
    <form className="flex items-center gap-3 mt-6 pl-4 pr-3.5 py-4 bg-white rounded-lg shadow-sm">
      <FilterSelect label="Fine Wine HQ" className="w-[174px]" />
      <FilterSelect label="All Categories" className="w-[155px]" />
      <FilterSelect label="All Locations" className="w-[300px]" />
      <input aria-label="Search item name or RFID" placeholder="Search item name or RFID..." className="flex-1 min-w-0 h-[42px] px-3 rounded-md border border-gray-300 text-[15px] placeholder:text-gray-500" />
      <button type="button" className="w-[83px] h-10 rounded-md bg-[#1463ff] text-[15px] text-white font-medium">Search</button>
    </form>
  )
}

export default function App() {
  return (
    <div className="min-h-screen flex flex-col bg-white font-['Inter',sans-serif]">
      <TopBar />
      <Breadcrumbs />
      <div className="flex flex-1">
        <Sidebar />
        <main className="flex-1 min-w-0">
          <PageHeader />
          <div className="flex gap-4">
            {stats.map((s) => (
              <div key={s.label} className="w-[159px] h-[117px] p-4 pr-0 bg-white rounded-lg shadow-sm">
                <p className="mt-px text-sm leading-5 text-gray-500">{s.label}</p>
                <p className={`text-[40px] leading-[42px] font-bold ${s.color}`}>{s.value}</p>
                <p className="text-[15px] leading-5 text-gray-500">{s.note}</p>
              </div>
            ))}
          </div>
          <MapCard />
          <Filters />
          <div className="mt-6 bg-white rounded-lg shadow-sm">
            <table className="w-full table-fixed text-left">
              <thead>
                <tr className="h-[45px] text-sm uppercase tracking-wider text-gray-500">
                  {columns.map((c) => (
                    <th key={c.name} className={`${c.width} font-semibold`}>{c.name}</th>
                  ))}
                </tr>
              </thead>
            </table>
          </div>
        </main>
      </div>
    </div>
  )
}
